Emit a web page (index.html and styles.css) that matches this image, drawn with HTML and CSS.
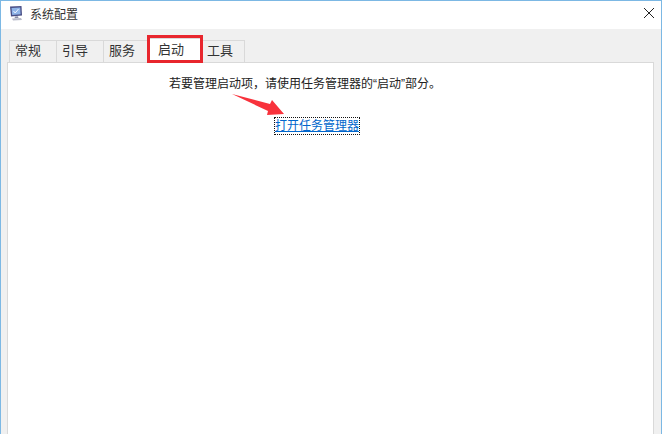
FILE: index.html
```html
<!DOCTYPE html>
<html>
<head>
  <meta charset="utf-8">
  <title>系统配置</title>
  <link rel="stylesheet" href="styles.css">
</head>
<body>
  <div class="window">
    <div class="titlebar">
      <svg class="app-icon" width="16" height="16" viewBox="0 0 16 16">
        <path d="M2 1.5 L13.5 1 L14 10.5 L3 11.5 Z" fill="#4a4f86"/>
        <path d="M3.5 3 L12.2 2.5 L12.6 9.2 L4.2 10 Z" fill="#8fb4e8"/>
        <path d="M5.5 6 L7.2 8 L10.5 4" fill="none" stroke="#eef4ff" stroke-width="1"/>
        <path d="M7 11.5 L10 11.2 L10.5 13 L6.5 13.3 Z" fill="#8a8fa8"/>
        <path d="M4 13.5 L13 13 L14 15 L5 15.5 Z" fill="#b9bccb"/>
      </svg>
      <span class="title">系统配置</span>
      <svg class="close" width="10" height="10" viewBox="0 0 10 10">
        <path d="M0 0 L10 10 M10 0 L0 10" stroke="#222" stroke-width="1" fill="none"/>
      </svg>
    </div>
    <div class="body">
      <div class="tabs">
        <div class="tab">常规</div>
        <div class="tab">引导</div>
        <div class="tab">服务</div>
        <div class="tab active">启动</div>
        <div class="tab">工具</div>
      </div>
      <div class="panel">
        <p class="hint">若要管理启动项，请使用任务管理器的“启动”部分。</p>
        <a class="link" href="#">打开任务管理器</a>
      </div>
    </div>
  </div>
  <div class="highlight"></div>
  <svg class="arrow" width="54" height="24" viewBox="0 0 54 24">
    <path d="M0 0 L38 10 L40 6 L52 20 L35 21 L36 17 Z" fill="#f8323c"/>
  </svg>
</body>
</html>
```

FILE: styles.css
```css
html, body {
  margin: 0;
  padding: 0;
}
body {
  position: relative;
  width: 662px;
  height: 434px;
  overflow: hidden;
  background: #fff;
  font-family: "Liberation Sans", "Noto Sans CJK SC", sans-serif;
  color: #222;
}
.window {
  box-sizing: border-box;
  height: 434px;
  display: flex;
  flex-direction: column;
  border: 1px solid #7cb8e4;
  border-bottom: none;
}
.titlebar {
  height: 28px;
  flex: none;
  display: flex;
  align-items: center;
  padding: 0 7px 4px 7px;
  box-sizing: border-box;
  background: #fff;
}
.app-icon {
  margin-right: 6px;
}
.title {
  font-size: 12px;
  color: #333;
}
.close {
  margin-left: auto;
}
.body {
  flex: 1;
  display: flex;
  flex-direction: column;
  padding: 11px 7px 0 6px;
  background: #f0f0f0;
}
.tabs {
  display: flex;
  height: 22px;
  padding-left: 2px;
  flex: none;
}
.tab {
  box-sizing: border-box;
  width: 48px;
  height: 22px;
  margin-right: -1px;
  padding-left: 5px;
  border: 1px solid #d9d9d9;
  border-bottom: none;
  background: #f0f0f0;
  font-size: 13px;
  line-height: 20px;
  color: #333;
}
.tab:nth-child(3) {
  width: 46px;
}
.tab:nth-child(5) {
  width: 44px;
  padding-left: 5px;
}
.tab.active {
  position: relative;
  z-index: 2;
  width: 54px;
  height: 24px;
  margin-top: -2px;
  padding-left: 9px;
  background: #fff;
  line-height: 21px;
}
.panel {
  flex: 1;
  border: 1px solid #d9d9d9;
  border-bottom: none;
  background: #fff;
  padding-left: 161px;
}
.hint {
  margin: 12px 0 0;
  font-size: 12px;
  line-height: 18px;
  color: #222;
}
.link {
  display: inline-block;
  margin: 25px 0 0 106px;
  font-size: 12px;
  line-height: 16px;
  color: #0066cc;
  outline: 1px dotted #111;
}
.highlight {
  position: absolute;
  z-index: 3;
  left: 147px;
  top: 35px;
  width: 50px;
  height: 22px;
  border: 3px solid #e8262d;
}
.arrow {
  position: absolute;
  left: 232px;
  top: 94px;
}
```
